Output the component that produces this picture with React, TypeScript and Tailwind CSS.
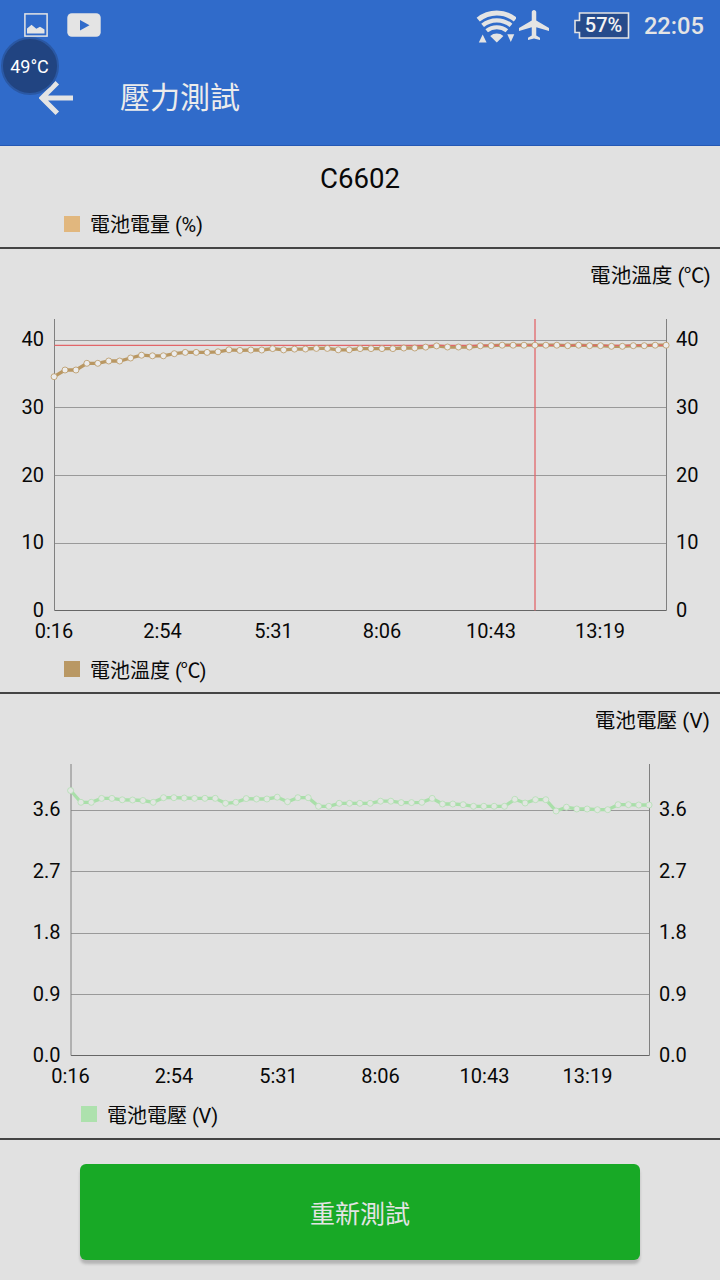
import { MdAirplanemodeActive } from "react-icons/md";

type ChartProps = {
  title: string;
  unit: string;
  left: number;
  right: number;
  baseline: number;
  ticks: { label: string; y: number; textY: number }[];
  times: { label: string; x: number }[];
  points: number[];
  color: string;
  dotStroke: string;
  dotFill: string;
  marker?: { x: number; y: number };
};

// y offsets of every sample inside the 345px high plot
const temperaturePoints = [
  76.7, 70, 70, 63.3, 63.3, 61, 61, 58, 55.2, 55.8, 55.8, 53.7, 52.4, 52.4,
  52.4, 51.8, 49.8, 50.4, 50, 50, 48.6, 49.9, 49.1, 49, 48.4, 48.4, 49.8, 49.8,
  48.6, 48.6, 48.6, 48.6, 48, 48, 47.1, 45.9, 47, 47, 47, 45.8, 45.7, 45.2,
  45.2, 45.2, 45.2, 45.2, 45.2, 45.7, 45.2, 45.7, 45.7, 46.3, 46.3, 45.7, 45.7,
  45.2, 45.2,
];

const voltagePoints = [
  45.5, 57.3, 57.3, 53.4, 53.4, 54.8, 55, 55.5, 57.3, 52.7, 52.7, 53, 53.3,
  53.3, 53.3, 58.3, 57.3, 53.6, 54, 54, 52.2, 56.7, 52.7, 52.7, 61.3, 61.3,
  58.3, 58.3, 58.3, 58.3, 56.2, 56.2, 57.6, 57.6, 57.3, 53.4, 59, 59, 59.7,
  61.3, 61.3, 61.3, 61.3, 54.3, 58, 54.7, 54.7, 66, 62.2, 64, 64, 64.7, 64.7,
  59.7, 59.7, 60, 60,
];

const temperatureTicks = [
  { label: "40", y: 40.5, textY: 46 },
  { label: "30", y: 107.5, textY: 114 },
  { label: "20", y: 175.5, textY: 182 },
  { label: "10", y: 243.5, textY: 249 },
  { label: "0", y: 310.5, textY: 317 },
];

const voltageTicks = [
  { label: "3.6", y: 65.5, textY: 71 },
  { label: "2.7", y: 126.5, textY: 133 },
  { label: "1.8", y: 188.5, textY: 194 },
  { label: "0.9", y: 249.5, textY: 256 },
  { label: "0.0", y: 310.5, textY: 317 },
];

const temperatureTimes = [
  { label: "0:16", x: 54 },
  { label: "2:54", x: 162.5 },
  { label: "5:31", x: 273.5 },
  { label: "8:06", x: 382 },
  { label: "10:43", x: 491 },
  { label: "13:19", x: 600 },
];

const voltageTimes = [
  { label: "0:16", x: 70.5 },
  { label: "2:54", x: 174 },
  { label: "5:31", x: 278.5 },
  { label: "8:06", x: 380.5 },
  { label: "10:43", x: 484.5 },
  { label: "13:19", x: 587.5 },
];

function Chart({
  title,
  unit,
  left,
  right,
  baseline,
  ticks,
  times,
  points,
  color,
  dotStroke,
  dotFill,
  marker,
}: ChartProps) {
  const step = (right - left) / (points.length - 1);
  const pointX = (i: number) => left - 0.4 + i * step;

  return (
    <div>
      <h2 className="flex h-[51px] items-center justify-end whitespace-pre pr-[10px] pt-[4px] text-[20.6px]">
        {title} <span className={unit === "(℃)" ? "tracking-[-0.8px]" : ""}>{unit}</span>
      </h2>
      <svg className="block h-[345px] w-full" viewBox="0 0 720 345">
        {ticks.map((t) => (
          <g key={t.label}>
            <line x1={left} x2={right} y1={t.y} y2={t.y} stroke={t.y === baseline ? "#666" : "#999"} />
            <text x={left - 10.5} y={t.textY} textAnchor="end" fontSize="20" fill="#080808">
              {t.label}
            </text>
            <text x={right + 9.5} y={t.textY} fontSize="20" fill="#080808">
              {t.label}
            </text>
          </g>
        ))}
        <line x1={left} x2={left} y1="19" y2={baseline} stroke="#808080" />
        <line x1={right} x2={right} y1="19" y2={baseline} stroke="#808080" />
        <polyline
          points={points.map((y, i) => `${pointX(i)},${y}`).join(" ")}
          fill="none"
          stroke={color}
          strokeWidth="3.3"
        />
        {marker && (
          <g stroke="#e2666a" strokeWidth="1.3">
            <line x1={left} x2={right} y1={marker.y} y2={marker.y} />
            <line x1={marker.x} x2={marker.x} y1="19" y2={baseline} />
          </g>
        )}
        {points.map((y, i) => (
          <circle key={i} cx={pointX(i)} cy={y} r="3" fill={dotFill} stroke={dotStroke} strokeWidth="0.8" />
        ))}
        {times.map((t) => (
          <text key={t.label} x={t.x} y="337.5" textAnchor="middle" fontSize="20" fill="#080808">
            {t.label}
          </text>
        ))}
      </svg>
    </div>
  );
}

function StatusBar() {
  return (
    <div className="flex h-[50px] items-center text-[#e4e4e4]">
      <svg className="ml-6 h-6 w-6" viewBox="0 0 24 24">
        <rect x="0.9" y="0.9" width="22.2" height="22.2" fill="none" stroke="currentColor" strokeWidth="1.5" />
        <path d="M3 20.5v-5l2.2-1.8 2.3-2 4.8 4 3.7-1.9 2.5 1.5 2 1.2v4z" fill="currentColor" />
      </svg>
      <svg className="ml-[19px] h-6 w-[34px]" viewBox="0 0 34 24">
        <rect x="0.3" y="0.3" width="33.4" height="23.4" rx="4.5" fill="currentColor" />
        <path d="M13 7v10.5l9.5-5.2z" fill="#306bca" />
      </svg>
      <svg className="ml-auto h-[36px] w-[40px]" viewBox="0 0 40 36">
        <g fill="none" stroke="currentColor">
          <path d="M2.2 12.6a29.5 29.5 0 0 1 37.2 0" strokeWidth="5" />
          <path d="M6.6 18.4a22.5 22.5 0 0 1 28.4 0" strokeWidth="4.4" />
          <path d="M10.7 23.8a16 16 0 0 1 20.2 0" strokeWidth="4" />
        </g>
        <path d="M20.8 35.5l-6.6-6.6a10 10 0 0 1 13.2 0z" fill="currentColor" />
        <path d="M6.7 27.5l3.9 8H2.8zM34.8 35l3.5-7.8h-7z" fill="currentColor" />
      </svg>
      <MdAirplanemodeActive className="h-[36px] w-[36px]" />
      <div className="ml-[22px] flex items-center">
        <svg className="h-[27px] w-[56px]" viewBox="0 0 56 27">
          <path
            d="M5.5 1h49v25h-49v-5.5H1v-12h4.5z"
            fill="#264b8b"
            stroke="currentColor"
            strokeWidth="1.6"
          />
          <text x="29.5" y="20" textAnchor="middle" fontSize="20" fontWeight="500" fill="#f4f4f4">
            57%
          </text>
        </svg>
      </div>
      <span className="ml-[14px] mr-4 mt-[4px] text-[23.7px] font-medium leading-none">22:05</span>
    </div>
  );
}

type LegendProps = {
  label: string;
  unit: string;
  className: string;
  swatch: string;
  textClass?: string;
};

function Legend({ label, unit, className, swatch, textClass = "pt-[4px]" }: LegendProps) {
  return (
    <div className={`flex items-center border-b-2 border-[#444] text-[20px] ${className}`}>
      <span className={`mr-[10px] h-4 w-4 ${swatch}`} />
      <span className={`whitespace-pre leading-none ${textClass}`}>
        {label} <span className={unit === "(℃)" ? "tracking-[-1.2px]" : "tracking-[-0.2px]"}>{unit}</span>
      </span>
    </div>
  );
}

export default function App() {
  return (
    <div className="relative flex h-[1280px] w-[720px] flex-col overflow-hidden bg-[#e1e1e1] font-['Roboto','Noto_Sans_CJK_TC',sans-serif] text-[#080808]">
      <header className="h-[146px] border-b border-[#2458b4] bg-[#306bca]">
        <StatusBar />
        <div className="flex h-24 items-center pl-[39px]">
          <svg className="h-[34px] w-[34px]" viewBox="0 0 34 34">
            <path d="M18.3 1.8L3 17l15.3 15.2M3 17h31" fill="none" stroke="#e4e4e4" strokeWidth="5" />
          </svg>
          <h1 className="ml-[47px] text-[30px] leading-none text-[#ececec]">壓力測試</h1>
        </div>
      </header>

      {/* floating temperature bubble */}
      <div className="absolute left-px top-[37px] flex h-[58px] w-[58px] items-center justify-center rounded-full border-2 border-[#2a58a4] bg-[#214481] pr-px text-[18px] text-white">
        49°C
      </div>

      <div className="flex h-[63px] items-center justify-center pt-[3px] text-[27.6px]">C6602</div>
      <Legend
        label="電池電量"
        unit="(%)"
        className="h-[40px] pb-[8px] pl-16"
        swatch="bg-[#e1b77e]"
        textClass="pt-[2px]"
      />

      <Chart
        title="電池溫度"
        unit="(℃)"
        left={54.5}
        right={666.5}
        baseline={310.5}
        ticks={temperatureTicks}
        times={temperatureTimes}
        points={temperaturePoints}
        color="#b99762"
        dotStroke="#b99762"
        dotFill="#ececec"
        marker={{ x: 535, y: 45.3 }}
      />
      <Legend label="電池溫度" unit="(℃)" className="h-[49px] pl-16" swatch="bg-[#b99864]" />

      <Chart
        title="電池電壓"
        unit="(V)"
        left={71}
        right={649.5}
        baseline={310.5}
        ticks={voltageTicks}
        times={voltageTimes}
        points={voltagePoints}
        color="#a9dfa9"
        dotStroke="#b3e0b3"
        dotFill="#e2e6e2"
      />
      <Legend label="電池電壓" unit="(V)" className="h-[50px] pl-[81px]" swatch="bg-[#ade1ad]" />

      <button className="mx-20 mt-6 h-24 rounded-[6px] bg-[#18a926] pt-[5px] text-[25px] text-[#e4e4e4] shadow-[0_4px_3px_rgba(0,0,0,0.2)]">
        重新測試
      </button>
    </div>
  );
}
